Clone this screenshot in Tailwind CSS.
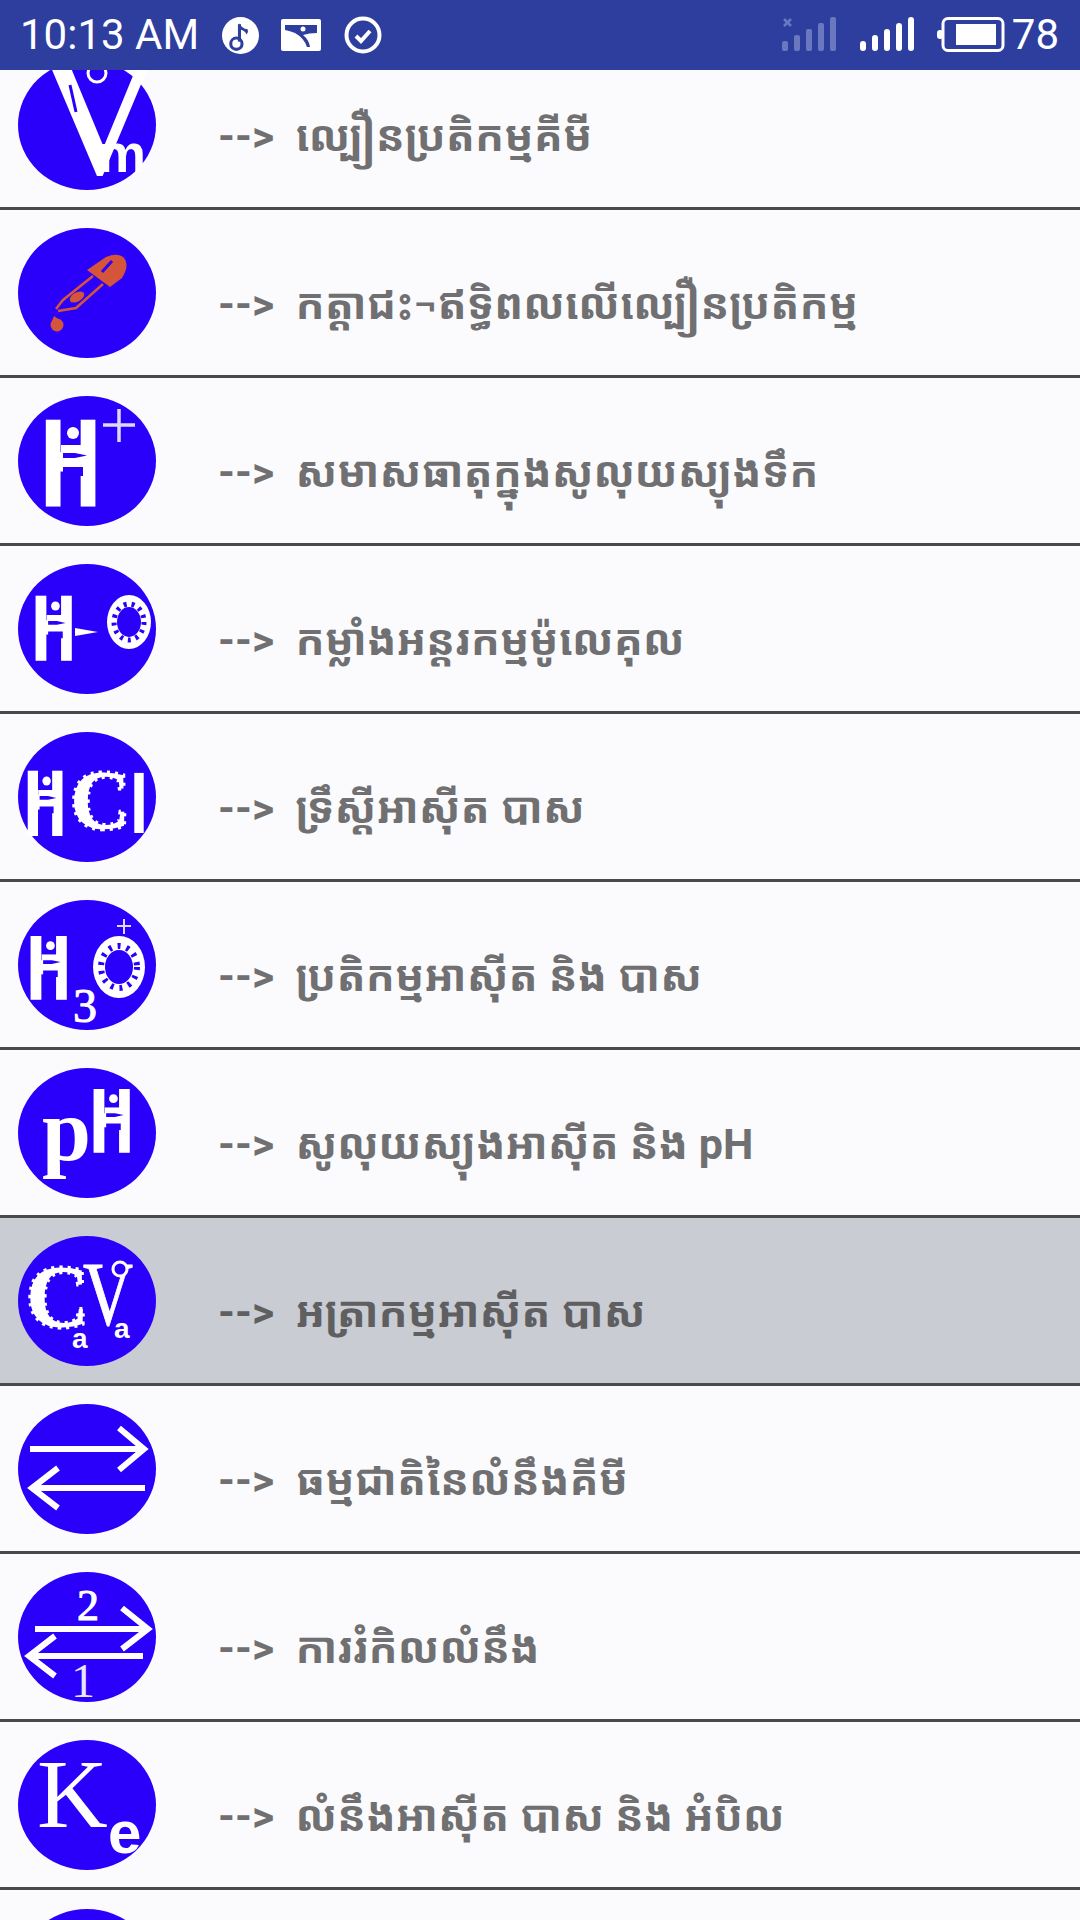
<!DOCTYPE html>
<html lang="km">
<head>
<meta charset="utf-8"/>
<title>Chemistry lessons</title>
<script src="https://cdn.jsdelivr.net/npm/@tailwindcss/browser@4"></script>
</head>
<body class="bg-[#fbfbfd]">
<div class="relative w-[1080px] h-[1920px] overflow-hidden font-['Roboto','Noto_Sans',sans-serif]">

  <!-- shared H glyph for the icons -->
  <svg class="absolute w-0 h-0">
    <defs>
      <g id="hh">
        <text transform="scale(0.66 1)" x="-4" y="87" font-family="Liberation Sans" font-weight="700" font-size="119" fill="#fff" stroke="#fff" stroke-width="5">H</text>
        <rect x="16" y="28" width="24" height="14" fill="#fff"/>
        <rect x="18" y="50" width="20" height="9" fill="#2a00fb"/>
        <circle cx="28" cy="16" r="6" fill="#fff"/>
        <path d="M18 36H30L42 38.500L30 41H18Z" fill="#2a00fb"/>
      </g>
    </defs>
  </svg>

  <!-- Status bar -->
  <div class="relative z-10 h-[70px] bg-[#2d3e9e] flex items-center text-white pl-[20px] pr-[21px]">
    <span class="text-[42px] leading-none font-normal">10:13 AM</span>
    <svg class="ml-[23px]" width="37" height="37" viewBox="0 0 36 36"><circle cx="18" cy="18" r="18" fill="#fff"/><path d="M17 7v17" stroke="#2d3e9e" stroke-width="3"/><circle cx="14" cy="26" r="5.500" fill="none" stroke="#2d3e9e" stroke-width="3"/><path d="M17 6q2 5 8 6q1 3-1 5q-2-4-7-5z" fill="#2d3e9e"/></svg>
    <svg class="ml-[22px]" width="40" height="32" viewBox="0 0 40 32"><rect width="40" height="32" rx="2" fill="#fff"/><path d="M4 6h32v8q-8 0-14 2q6 5 7 12h-3q-3-9-12-14q-5-2-10-3z" fill="#2d3e9e"/><circle cx="22" cy="10" r="2.500" fill="#fff"/></svg>
    <svg class="ml-[23px]" width="38" height="38" viewBox="0 0 38 38"><circle cx="19" cy="19" r="16.500" fill="none" stroke="#fff" stroke-width="4"/><path d="M12 20l5 5 9-10" fill="none" stroke="#fff" stroke-width="4"/></svg>

    <svg class="ml-auto" width="56" height="36" viewBox="0 0 56 36" fill="#6a78bf"><path d="M3 2l7 7M10 2l-7 7" stroke="#6a78bf" stroke-width="2.500"/><rect x="1" y="24" width="6" height="10" rx="2"/><rect x="13" y="18" width="6" height="16" rx="2"/><rect x="25" y="12" width="6" height="22" rx="2"/><rect x="37" y="6" width="6" height="28" rx="2"/><rect x="49" y="0" width="6" height="34" rx="2"/></svg>
    <svg class="ml-[22px]" width="56" height="36" viewBox="0 0 56 36" fill="#fff"><rect x="1" y="24" width="6" height="10" rx="3"/><rect x="13" y="18" width="6" height="16" rx="3"/><rect x="25" y="12" width="6" height="22" rx="3"/><rect x="37" y="6" width="6" height="28" rx="3"/><rect x="49" y="0" width="6" height="34" rx="3"/></svg>
    <svg class="ml-[22px]" width="68" height="36" viewBox="0 0 68 36"><rect x="6" y="1.500" width="60" height="32" rx="5" fill="none" stroke="#fff" stroke-width="3"/><rect x="0" y="13" width="6" height="9" rx="3" fill="#fff"/><rect x="19" y="7" width="40" height="21" fill="#fff"/></svg>
    <span class="ml-[7px] text-[42px] leading-none font-normal">78</span>
  </div>

  <!-- List -->
  <div class="-mt-[28px] flex flex-col">

    <div class="h-[168px] shrink-0 border-b-[3px] border-[#4a494c] flex items-center pl-[18px]">
      <svg width="138" height="130" viewBox="0 0 138 130"><ellipse cx="69" cy="65" rx="69" ry="65" fill="#2a00fb"/><text x="20" y="112" font-family="Liberation Serif" font-size="170" fill="#fff" stroke="#fff" stroke-width="2">V</text><path d="M52 25L58 52" stroke="#2a00fb" stroke-width="3"/><circle cx="79" cy="13" r="9" fill="#2a00fb" stroke="#fff" stroke-width="3"/><text x="80" y="112" font-family="Liberation Sans" font-weight="700" font-size="54" fill="#fff">m</text></svg>
      <span class="ml-[62px] pt-[24px] text-[43px] font-bold text-[#707072] whitespace-pre font-['Roboto','Noto_Sans_Khmer','Noto_Sans',sans-serif]">-->  ល្បឿនប្រតិកម្មគីមី</span>
    </div>

    <div class="h-[168px] shrink-0 border-b-[3px] border-[#4a494c] flex items-center pl-[18px]">
      <svg width="138" height="130" viewBox="0 0 138 130"><ellipse cx="69" cy="65" rx="69" ry="65" fill="#2a00fb"/><path d="M69 42L88 29Q100 24 106 30Q112 37 104 50L92 59Z" fill="#d4553a"/><path d="M84 44L94 33" stroke="#2a00fb" stroke-width="3"/><path d="M75 48L45 72L38 81M85 56L58 80L40 83" fill="none" stroke="#d4553a" stroke-width="2.500"/><ellipse cx="59" cy="69" rx="8" ry="4.500" fill="#d4553a" transform="rotate(-30 59 69)"/><circle cx="39" cy="97" r="6.500" fill="#d4553a"/><path d="M36 88L33 96L44 94Z" fill="#d4553a"/></svg>
      <span class="ml-[62px] pt-[24px] text-[43px] font-bold text-[#707072] whitespace-pre font-['Roboto','Noto_Sans_Khmer','Noto_Sans',sans-serif]">-->  កត្តាជះ¬ឥទ្ធិពលលើល្បឿនប្រតិកម្ម</span>
    </div>

    <div class="h-[168px] shrink-0 border-b-[3px] border-[#4a494c] flex items-center pl-[18px]">
      <svg width="138" height="130" viewBox="0 0 138 130"><ellipse cx="69" cy="65" rx="69" ry="65" fill="#2a00fb"/><use href="#hh" transform="translate(27 21)"/><path d="M85 29H117M101 13V46" stroke="#dcd8ff" stroke-width="3.500"/></svg>
      <span class="ml-[62px] pt-[24px] text-[43px] font-bold text-[#707072] whitespace-pre font-['Roboto','Noto_Sans_Khmer','Noto_Sans',sans-serif]">-->  សមាសធាតុក្នុងសូលុយស្យុងទឹក</span>
    </div>

    <div class="h-[168px] shrink-0 border-b-[3px] border-[#4a494c] flex items-center pl-[18px]">
      <svg width="138" height="130" viewBox="0 0 138 130"><ellipse cx="69" cy="65" rx="69" ry="65" fill="#2a00fb"/><use href="#hh" transform="translate(17 30) scale(0.73 0.75)"/><path d="M57 64L80 68L57 72Z" fill="#fff"/><ellipse cx="111" cy="58" rx="22" ry="27" fill="#fff"/><ellipse cx="111" cy="58" rx="12" ry="15" fill="#2a00fb"/><ellipse cx="111" cy="58" rx="15" ry="18" fill="none" stroke="#2a00fb" stroke-width="5" stroke-dasharray="3 5"/></svg>
      <span class="ml-[62px] pt-[24px] text-[43px] font-bold text-[#707072] whitespace-pre font-['Roboto','Noto_Sans_Khmer','Noto_Sans',sans-serif]">-->  កម្លាំងអន្តរកម្មម៉ូលេគុល</span>
    </div>

    <div class="h-[168px] shrink-0 border-b-[3px] border-[#4a494c] flex items-center pl-[18px]">
      <svg width="138" height="130" viewBox="0 0 138 130"><ellipse cx="69" cy="65" rx="69" ry="65" fill="#2a00fb"/><use href="#hh" transform="translate(9 37) scale(0.7 0.75)"/><text x="52" y="97" font-family="Liberation Serif" font-weight="700" font-size="84" fill="#fff" stroke="#fff" stroke-width="4" stroke-dasharray="3 5">C</text><text x="112" y="101" font-family="Liberation Sans" font-weight="700" font-size="88" fill="#fff" textLength="18" lengthAdjust="spacingAndGlyphs">I</text></svg>
      <span class="ml-[62px] pt-[24px] text-[43px] font-bold text-[#707072] whitespace-pre font-['Roboto','Noto_Sans_Khmer','Noto_Sans',sans-serif]">-->  ទ្រឹស្តីអាស៊ីត បាស</span>
    </div>

    <div class="h-[168px] shrink-0 border-b-[3px] border-[#4a494c] flex items-center pl-[18px]">
      <svg width="138" height="130" viewBox="0 0 138 130" class="overflow-visible"><ellipse cx="69" cy="65" rx="69" ry="65" fill="#2a00fb"/><use href="#hh" transform="translate(12 34) scale(0.73 0.73)"/><text x="55" y="122" font-family="Liberation Serif" font-size="48" fill="#fff" stroke="#fff" stroke-width="1">3</text><ellipse cx="101" cy="67" rx="26" ry="31" fill="#fff"/><ellipse cx="101" cy="67" rx="14" ry="17" fill="#2a00fb"/><ellipse cx="101" cy="67" rx="18" ry="21" fill="none" stroke="#2a00fb" stroke-width="6" stroke-dasharray="3 6"/><path d="M99 26H113M106 19V34" stroke="#dcd8ff" stroke-width="2"/></svg>
      <span class="ml-[62px] pt-[24px] text-[43px] font-bold text-[#707072] whitespace-pre font-['Roboto','Noto_Sans_Khmer','Noto_Sans',sans-serif]">-->  ប្រតិកម្មអាស៊ីត និង បាស</span>
    </div>

    <div class="h-[168px] shrink-0 border-b-[3px] border-[#4a494c] flex items-center pl-[18px]">
      <svg width="138" height="130" viewBox="0 0 138 130" class="overflow-visible"><ellipse cx="69" cy="65" rx="69" ry="65" fill="#2a00fb"/><use href="#hh" transform="translate(75 19) scale(0.73 0.73)"/><text x="24" y="92" font-family="Liberation Serif" font-weight="700" font-size="88" fill="#fff">p</text><circle cx="50" cy="76" r="5" fill="#2a00fb"/></svg>
      <span class="ml-[62px] pt-[24px] text-[43px] font-bold text-[#707072] whitespace-pre font-['Roboto','Noto_Sans_Khmer','Noto_Sans',sans-serif]">-->  សូលុយស្យុងអាស៊ីត និង pH</span>
    </div>

    <div class="h-[168px] shrink-0 border-b-[3px] border-[#4a494c] bg-[#c9ccd2] flex items-center pl-[18px]">
      <svg width="138" height="130" viewBox="0 0 138 130" class="overflow-visible"><ellipse cx="69" cy="65" rx="69" ry="65" fill="#2a00fb"/><text x="8" y="90" font-family="Liberation Serif" font-weight="700" font-size="88" fill="#fff" stroke="#fff" stroke-width="4" stroke-dasharray="3 5">C</text><text x="65" y="89" font-family="Liberation Serif" font-size="92" fill="#fff" stroke="#fff" stroke-width="1" textLength="50" lengthAdjust="spacingAndGlyphs">V</text><circle cx="102" cy="33" r="7" fill="#2a00fb" stroke="#fff" stroke-width="3"/><text x="54" y="112" font-family="Liberation Sans" font-weight="700" font-size="28" fill="#fff">a</text><text x="96" y="102" font-family="Liberation Sans" font-weight="700" font-size="28" fill="#fff">a</text></svg>
      <span class="ml-[62px] pt-[24px] text-[43px] font-bold text-[#5f5f62] whitespace-pre font-['Roboto','Noto_Sans_Khmer','Noto_Sans',sans-serif]">-->  អត្រាកម្មអាស៊ីត បាស</span>
    </div>

    <div class="h-[168px] shrink-0 border-b-[3px] border-[#4a494c] flex items-center pl-[18px]">
      <svg width="138" height="130" viewBox="0 0 138 130"><ellipse cx="69" cy="65" rx="69" ry="65" fill="#2a00fb"/><path d="M12 45H124M101 24L126 45L101 66M127 84H15M40 64L14 84L40 104" fill="none" stroke="#fff" stroke-width="6"/></svg>
      <span class="ml-[62px] pt-[24px] text-[43px] font-bold text-[#707072] whitespace-pre font-['Roboto','Noto_Sans_Khmer','Noto_Sans',sans-serif]">-->  ធម្មជាតិនៃលំនឹងគីមី</span>
    </div>

    <div class="h-[168px] shrink-0 border-b-[3px] border-[#4a494c] flex items-center pl-[18px]">
      <svg width="138" height="130" viewBox="0 0 138 130" class="overflow-visible"><ellipse cx="69" cy="65" rx="69" ry="65" fill="#2a00fb"/><text x="59" y="48" font-family="Liberation Serif" font-size="44" fill="#fff" stroke="#fff" stroke-width="1">2</text><path d="M17 57H128M104 36L130 57L104 77M125 84H12M37 64L11 84L37 104" fill="none" stroke="#fff" stroke-width="6"/><text x="53" y="125" font-family="Liberation Serif" font-size="48" fill="#e8e6ff">1</text></svg>
      <span class="ml-[62px] pt-[24px] text-[43px] font-bold text-[#707072] whitespace-pre font-['Roboto','Noto_Sans_Khmer','Noto_Sans',sans-serif]">-->  ការរំកិលលំនឹង</span>
    </div>

    <div class="h-[168px] shrink-0 border-b-[3px] border-[#4a494c] flex items-center pl-[18px]">
      <svg width="138" height="130" viewBox="0 0 138 130"><ellipse cx="69" cy="65" rx="69" ry="65" fill="#2a00fb"/><text x="19" y="87" font-family="Liberation Serif" font-size="98" fill="#fff">K</text><text x="90" y="113" font-family="Liberation Sans" font-weight="700" font-size="60" fill="#fff">e</text></svg>
      <span class="ml-[62px] pt-[24px] text-[43px] font-bold text-[#707072] whitespace-pre font-['Roboto','Noto_Sans_Khmer','Noto_Sans',sans-serif]">-->  លំនឹងអាស៊ីត បាស និង អំបិល</span>
    </div>

    <div class="h-[168px] shrink-0 flex items-center pl-[18px]">
      <svg width="138" height="130" viewBox="0 0 138 130"><ellipse cx="69" cy="65" rx="69" ry="65" fill="#2a00fb"/></svg>
    </div>
  </div>
</div>
</body>
</html>
